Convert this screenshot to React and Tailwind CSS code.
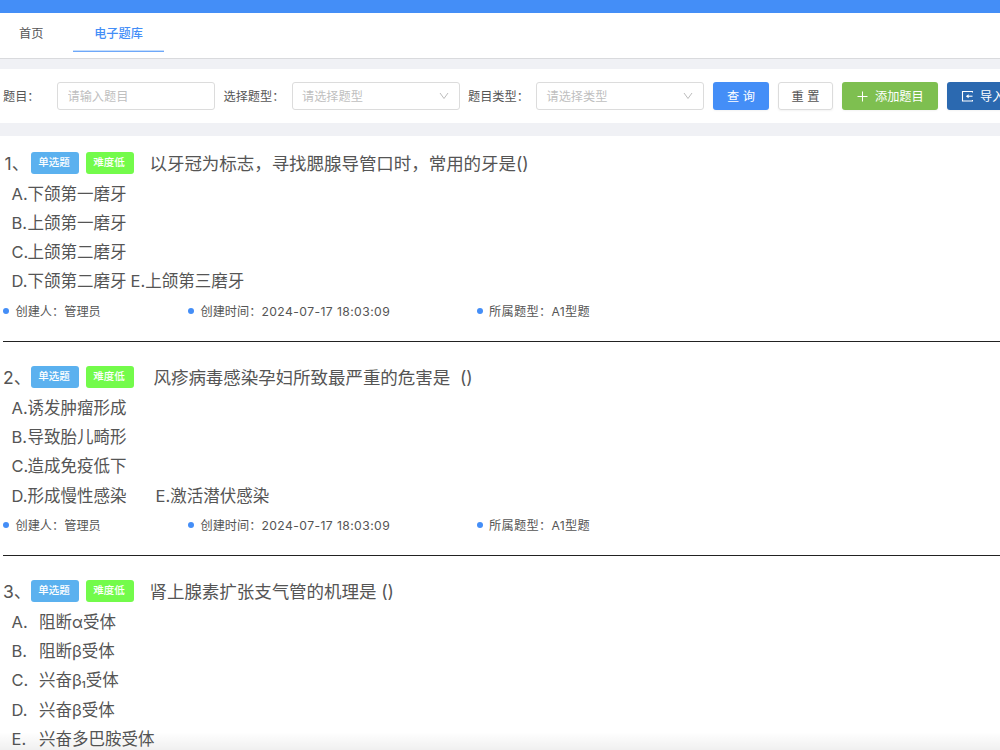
import { clsx } from 'clsx';

const questions = [
  {
    id: 1,
    title: '以牙冠为标志，寻找腮腺导管口时，常用的牙是()',
    titleClass: 'ml-[15.5px]',
    options: [
      ['A.', '下颌第一磨牙'],
      ['B.', '上颌第一磨牙'],
      ['C.', '上颌第二磨牙'],
      ['D.', '下颌第二磨牙', 'E.', '上颌第三磨牙'],
    ],
    extraClass: 'ml-[4px]',
    meta: { creator: '管理员', createdAt: '2024-07-17 18:03:09', type: 'A1型题' },
  },
  {
    id: 2,
    title: '风疹病毒感染孕妇所致最严重的危害是\u00a0 ()',
    titleClass: 'ml-[19.5px]',
    options: [
      ['A.', '诱发肿瘤形成'],
      ['B.', '导致胎儿畸形'],
      ['C.', '造成免疫低下'],
      ['D.', '形成慢性感染', 'E.', '激活潜伏感染'],
    ],
    extraClass: 'ml-[29px]',
    meta: { creator: '管理员', createdAt: '2024-07-17 18:03:09', type: 'A1型题' },
  },
  {
    id: 3,
    title: '肾上腺素扩张支气管的机理是 ()',
    titleClass: 'ml-[15.5px]',
    wide: true,
    options: [
      ['A.', '阻断α受体'],
      ['B.', '阻断β受体'],
      ['C.', <>兴奋β<sub className="bottom-[-2px] text-[9px] font-semibold">1</sub>受体</>],
      ['D.', '兴奋β受体'],
      ['E.', '兴奋多巴胺受体'],
    ],
  },
];

const Tag = ({ className, children }) => (
  <span
    className={clsx(
      'flex h-[22px] w-12 shrink-0 justify-center rounded-[3px] pr-[2px] text-[10.5px] leading-[21px] font-medium text-white',
      className
    )}
  >
    {children}
  </span>
);

const Meta = ({ className, label, value }) => (
  <div className={clsx('flex shrink-0 items-center', className)}>
    <span className="mr-[6.5px] h-1.5 w-1.5 rounded-full bg-[#448ef7]" />
    <span className="pt-[2px]">{label}：</span>
    <span className="pt-[2px]">{value}</span>
  </div>
);

const Select = ({ placeholder }) => (
  <div className="flex h-7 w-[168px] shrink-0 items-center justify-between rounded-[3px] border border-[#dcdcdc] pr-[10px] pl-[9.5px] text-[#bfbfbf]">
    <span className="pt-[2px]">{placeholder}</span>
    <svg className="h-[10px] w-[10px]" viewBox="0 0 10 10" fill="none" stroke="#bdbdbd" strokeWidth="1">
      <path d="M1 2l4 5.5L9 2" />
    </svg>
  </div>
);

const Question = ({ item }) => (
  <div
    className={clsx(
      'ml-[3px] shrink-0',
      item.meta && 'mb-[19.6px] h-[194.6px] border-b border-[#222]'
    )}
  >
    <div className="flex h-[31px] items-center text-[17.5px]">
      <span className={clsx('w-7 shrink-0 pt-[2px] whitespace-nowrap', item.id === 1 && 'pl-[1.5px]')}>
        {item.id}、
      </span>
      <Tag className="bg-[#5bb1ef]">单选题</Tag>
      <Tag className="ml-[7px] bg-[#73fb4b]">难度低</Tag>
      <span className={clsx('pt-[2px] tracking-[-0.05px] whitespace-nowrap', item.titleClass)}>{item.title}</span>
    </div>
    <div className="pl-[8.5px] text-[16.5px] leading-[30px]">
      {item.options.map(([letter, text, extraLetter, extraText]) => (
        <div key={letter} className="flex h-[29.3px] whitespace-nowrap">
          <span className={clsx(item.wide ? 'w-[27.5px]' : 'w-[16px]')}>{letter}</span>
          <span>{text}</span>
          {extraText && (
            <span className={item.extraClass}>
              {extraLetter}
              {extraText}
            </span>
          )}
        </div>
      ))}
    </div>
    {item.meta && (
      <div className="flex h-[30.4px] items-center text-[12.2px]">
        <Meta className="w-[185px]" label="创建人" value={item.meta.creator} />
        <Meta
          className="w-[288.5px]"
          label="创建时间"
          value={<span className="tracking-[0.4px]">{item.meta.createdAt}</span>}
        />
        <Meta className="tracking-[0.3px]" label="所属题型" value={item.meta.type} />
      </div>
    )}
  </div>
);

const App = () => {
  return (
    <div className="relative flex h-[750px] w-[1000px] flex-col overflow-hidden bg-white font-['Inter','Noto_Sans_CJK_SC',sans-serif] text-[12.2px] text-[#555]">
      <div className="h-[13px] shrink-0 bg-[#448ef7]" />

      <nav className="flex h-[46px] shrink-0 items-start border-b border-[#d9dadd] pl-[19px]">
        <a className="w-[54px] leading-[42px]">首页</a>
        <a className="w-[91px] text-center font-medium text-[#448ef7]">
          <span className="block h-[37px] leading-[42px]">电子题库</span>
          <span className="block h-px bg-[#c5ddfc]" />
          <span className="block h-px bg-[#6ea8f9]" />
        </a>
      </nav>

      <div className="h-[10px] shrink-0 bg-[#f0f1f5]" />

      <div className="flex h-[54px] shrink-0 items-center whitespace-nowrap">
        <label className="ml-[3px] w-[54px] shrink-0 pt-[2px]">题目：</label>
        <input
          className="h-7 w-[158px] shrink-0 rounded-[3px] border border-[#dcdcdc] px-[9.5px] placeholder:text-[#bfbfbf]"
          placeholder="请输入题目"
        />
        <label className="ml-[8.5px] w-[68px] shrink-0 pt-[2px]">选择题型：</label>
        <Select placeholder="请选择题型" />
        <label className="ml-[8.5px] w-[68px] shrink-0 pt-[2px]">题目类型：</label>
        <Select placeholder="请选择类型" />
        <button className="ml-[9px] h-7 w-14 shrink-0 rounded-[3px] bg-[#448ef7] pt-[2px] text-white shadow-xs">
          查 询
        </button>
        <button className="ml-[9px] h-7 w-[55px] shrink-0 rounded-[3px] border border-[#dcdcdc] pt-[2px] shadow-xs">
          重 置
        </button>
        <button className="ml-[9px] flex h-7 w-[96px] shrink-0 items-center rounded-[3px] bg-[#7ebf50] pl-[14.5px] text-white shadow-xs">
          <svg className="mr-[7.5px] h-[11px] w-[11px]" viewBox="0 0 11 11" stroke="currentColor" strokeWidth="1">
            <path d="M0.5 5.5h10M5.5 0.5v10" />
          </svg>
          <span className="pt-[2px]">添加题目</span>
        </button>
        <button className="ml-[9px] flex h-7 w-[84px] shrink-0 items-center rounded-[3px] bg-[#2b69b0] pl-[14px] text-white shadow-xs">
          <svg className="mr-[7px] h-3 w-3" viewBox="0 0 12 12" fill="none" stroke="currentColor" strokeWidth="1.1">
            <path d="M11.5 2.5V1.5H1.5v9.5h10v-1" />
            <path d="M6 6.2h5.5" />
            <path d="M7.6 4.2v4L4.8 6.2z" fill="currentColor" stroke="none" />
          </svg>
          <span className="pt-[2px]">导入</span>
        </button>
      </div>

      <div className="h-[13px] shrink-0 bg-[#f0f1f5]" />

      <main className="flex flex-col pt-[11.5px]">
        {questions.map((item) => (
          <Question key={item.id} item={item} />
        ))}
      </main>

      <div className="absolute inset-x-0 bottom-0 h-[18px] bg-gradient-to-b from-transparent to-black/6" />
    </div>
  );
};

export default App;
